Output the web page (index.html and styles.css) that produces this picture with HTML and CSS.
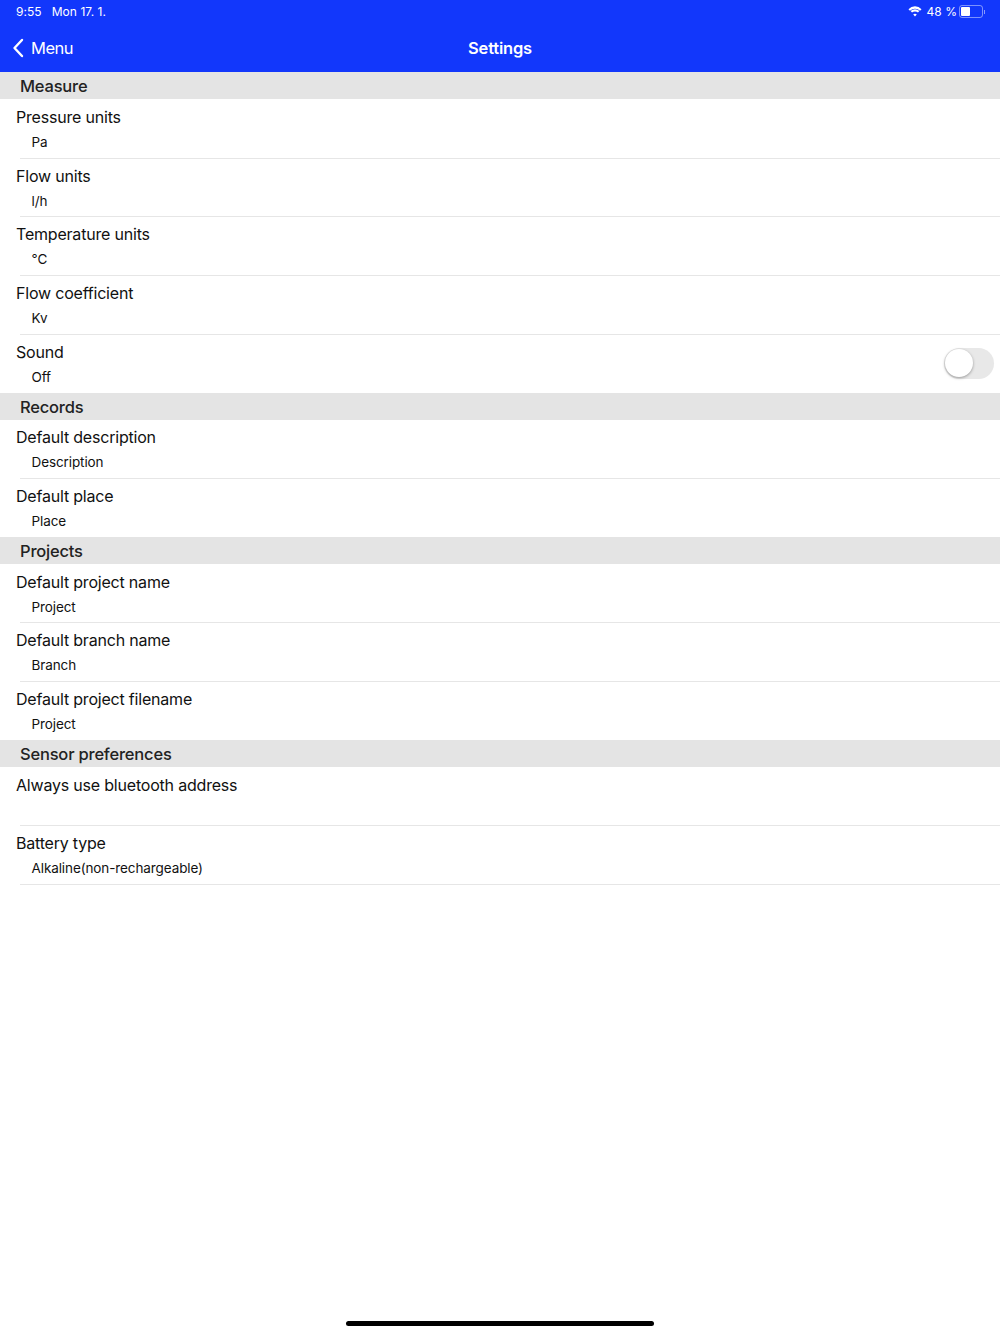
FILE: index.html
```html
<!DOCTYPE html>
<html lang="en">
<head>
    <meta charset="UTF-8">
    <meta name="viewport" content="width=device-width, initial-scale=1.0">
    <title>Settings</title>
    <link rel="stylesheet" href="styles.css">
</head>
<body>

<header class="topbar">
    <div class="status">
        <div class="status-left">
            <span>9:55</span>
            <span>Mon 17. 1.</span>
        </div>
        <div class="status-right">
            <svg class="wifi" width="14" height="11" viewBox="0 0 15 11">
                <path d="M7.5 2.6c2.1 0 4 .8 5.4 2.1l1.6-1.7A10 10 0 0 0 7.5 0 10 10 0 0 0 .5 3l1.6 1.7a7.9 7.9 0 0 1 5.4-2.1z" fill="#fff"/>
                <path d="M7.5 5.4c1.2 0 2.3.4 3.2 1.2l1.5-1.6a6.9 6.9 0 0 0-9.4 0l1.5 1.6c.9-.8 2-1.2 3.2-1.2z" fill="#fff"/>
                <path d="M7.5 8c-.8 0-1.4.2-1.9.7l1.9 2.1 1.9-2.1c-.5-.5-1.1-.7-1.9-.7z" fill="#fff"/>
            </svg>
            <span>48 %</span>
            <span class="battery"><span class="battery-level"></span></span>
            <span class="battery-tip"></span>
        </div>
    </div>
    <nav class="navbar">
        <a class="back">
            <svg width="12" height="20" viewBox="0 0 12 20">
                <path d="M10 2 L2.5 10 L10 18" fill="none" stroke="#fff" stroke-width="2.4" stroke-linecap="round" stroke-linejoin="round"/>
            </svg>
            Menu
        </a>
        <h1>Settings</h1>
    </nav>
</header>

<main>
    <h2 class="section">Measure</h2>
    <div class="row"><div class="label">Pressure units</div><div class="value">Pa</div></div>
    <div class="row"><div class="label">Flow units</div><div class="value">l/h</div></div>
    <div class="row"><div class="label">Temperature units</div><div class="value">°C</div></div>
    <div class="row"><div class="label">Flow coefficient</div><div class="value">Kv</div></div>
    <div class="row last">
        <div class="label">Sound</div><div class="value">Off</div>
        <span class="toggle"><span class="knob"></span></span>
    </div>

    <h2 class="section">Records</h2>
    <div class="row"><div class="label">Default description</div><div class="value">Description</div></div>
    <div class="row last"><div class="label">Default place</div><div class="value">Place</div></div>

    <h2 class="section">Projects</h2>
    <div class="row"><div class="label">Default project name</div><div class="value">Project</div></div>
    <div class="row"><div class="label">Default branch name</div><div class="value">Branch</div></div>
    <div class="row last"><div class="label">Default project filename</div><div class="value">Project</div></div>

    <h2 class="section">Sensor preferences</h2>
    <div class="row"><div class="label">Always use bluetooth address</div><div class="value"></div></div>
    <div class="row"><div class="label">Battery type</div><div class="value">Alkaline(non-rechargeable)</div></div>
</main>

<div class="home-bar"></div>

</body>
</html>
```

FILE: styles.css
```css
html, body {
    height: 100%;
}
body {
    margin: 0;
    position: relative;
    overflow: hidden;
    font-family: 'Inter', 'Liberation Sans', sans-serif;
    background: #fff;
    color: #111;
}
.topbar {
    height: 72.3px;
    background: #1237fb;
    color: #fff;
}
.status {
    height: 23px;
    padding: 0 15px 0 16px;
    display: flex;
    justify-content: space-between;
    align-items: center;
    font-size: 12px;
    letter-spacing: 0.05px;
}
.status-left {
    display: flex;
    gap: 10px;
}
.status-right {
    display: flex;
    align-items: center;
}
.wifi {
    margin-right: 4px;
}
.battery {
    width: 19px;
    height: 9px;
    margin-left: 2px;
    padding: 1px 2px 1px 1px;
    border: 1px solid rgba(255,255,255,0.45);
    border-radius: 3px;
    display: flex;
}
.battery-level {
    width: 9px;
    background: #fff;
    border-radius: 1px;
}
.battery-tip {
    width: 1px;
    height: 4px;
    margin-left: 1px;
    background: rgba(255,255,255,0.5);
}
.navbar {
    height: 49.3px;
    display: flex;
    align-items: center;
    justify-content: center;
    position: relative;
}
.navbar h1 {
    margin: 0;
    font-size: 16.5px;
    font-weight: 600;
    letter-spacing: -0.2px;
}
.back {
    position: absolute;
    left: 12px;
    top: 15px;
    display: flex;
    align-items: center;
    gap: 7px;
    font-size: 16.5px;
    letter-spacing: -0.5px;
}
.section {
    margin: 0;
    height: 27px;
    line-height: 29px;
    padding-left: 20px;
    background: #e4e4e4;
    color: #222;
    font-size: 16.5px;
    font-weight: 500;
    letter-spacing: -0.2px;
}
.row {
    height: 58.65px;
    box-sizing: border-box;
    padding-left: 16px;
    position: relative;
}
.row::after {
    content: "";
    position: absolute;
    left: 20px;
    right: 0;
    bottom: -0.8px;
    height: 1px;
    background: #e6e6e6;
}
.row.last::after {
    display: none;
}
.label {
    padding-top: 7.8px;
    font-size: 16px;
    line-height: 20px;
    letter-spacing: -0.2px;
}
.value {
    margin-top: 5px;
    padding-left: 15.5px;
    font-size: 13.5px;
    line-height: 20px;
    letter-spacing: -0.1px;
}
.toggle {
    position: absolute;
    right: 6px;
    top: 14px;
    width: 50px;
    height: 31px;
    border-radius: 16px;
    background: #e8e8e8;
}
.knob {
    position: absolute;
    left: 1px;
    top: 1px;
    width: 28px;
    height: 28px;
    border-radius: 50%;
    background: #fff;
    box-shadow: 0 1px 3px rgba(0,0,0,0.35);
}
.home-bar {
    position: absolute;
    left: 346px;
    bottom: 8px;
    width: 308px;
    height: 5px;
    border-radius: 3px;
    background: #000;
}
```
